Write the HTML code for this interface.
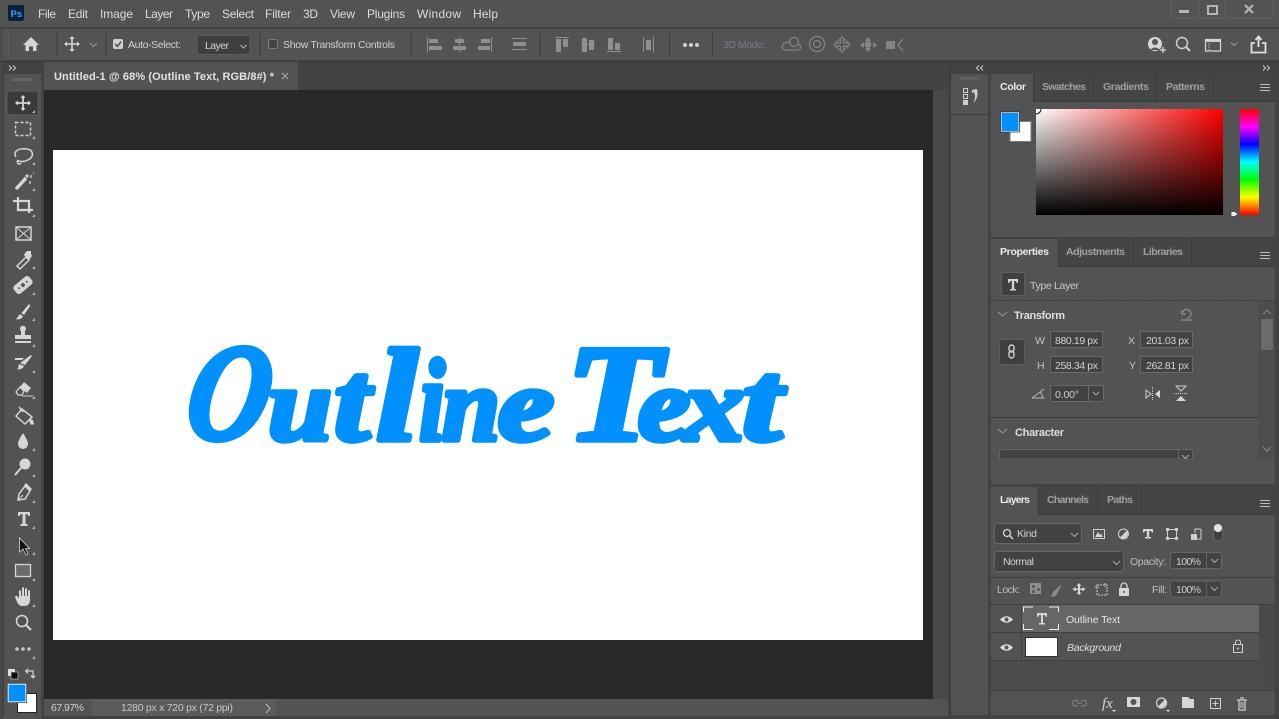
<!DOCTYPE html>
<html><head><meta charset="utf-8"><title>Photoshop</title>
<style>
html,body{margin:0;padding:0;background:#535353;overflow:hidden}
svg{display:block;position:absolute;left:0;top:0}
text{font-family:"Liberation Sans",sans-serif;font-size:11px;fill:#d4d4d4}
.m{font-size:12px;fill:#dcdcdc}
.b{font-weight:bold}
.tab{font-size:10.5px;font-weight:bold;fill:#a0a0a0}
.on{fill:#eaeaea}
.s{font-size:10.5px;fill:#d0d0d0}
.i{fill:#d6d6d6}
.l{fill:none;stroke:#d6d6d6;stroke-width:1.5}
.g{fill:none;stroke:#8a8a8a;stroke-width:1.2}
.box{fill:#424242;stroke:#6a6a6a;stroke-width:1}
.logo{font-family:"Liberation Serif",serif;font-weight:bold;font-style:italic;fill:#0091ff;stroke:#0091ff;stroke-width:5.5;stroke-linejoin:round}
</style></head><body>
<svg width="1279" height="719" viewBox="0 0 1279 719" xmlns="http://www.w3.org/2000/svg">
<defs>
<linearGradient id="wr" x1="0" x2="1" y1="0" y2="0"><stop offset="0" stop-color="#fff"/><stop offset="1" stop-color="#f00"/></linearGradient>
<linearGradient id="bk" x1="0" x2="0" y1="0" y2="1"><stop offset="0" stop-color="#000" stop-opacity="0"/><stop offset="1" stop-color="#000"/></linearGradient>
<linearGradient id="hue" x1="0" x2="0" y1="0" y2="1"><stop offset="0" stop-color="#f00"/><stop offset=".167" stop-color="#f0f"/><stop offset=".333" stop-color="#00f"/><stop offset=".5" stop-color="#0ff"/><stop offset=".667" stop-color="#0f0"/><stop offset=".833" stop-color="#ff0"/><stop offset="1" stop-color="#f00"/></linearGradient>
<path id="c" d="M0 3L3 0V3Z" fill="#b5b5b5"/>
</defs>

<!-- base -->
<rect width="1279" height="719" fill="#535353"/>

<!-- menu bar -->
<rect x="0" y="27" width="1279" height="1.5" fill="#3c3c3c"/>
<rect x="8" y="5" width="16" height="16" rx="2" fill="#04223f"/>
<text x="10.500" y="17" style="font-size:9.500px;font-weight:bold;fill:#3ca6f5">Ps</text>
<text class="m" x="38" y="18" textLength="18">File</text>
<text class="m" x="68" y="18" textLength="20">Edit</text>
<text class="m" x="100" y="18" textLength="33">Image</text>
<text class="m" x="145" y="18" textLength="28">Layer</text>
<text class="m" x="185" y="18" textLength="25">Type</text>
<text class="m" x="222" y="18" textLength="32">Select</text>
<text class="m" x="265" y="18" textLength="26">Filter</text>
<text class="m" x="303" y="18" textLength="15">3D</text>
<text class="m" x="330" y="18" textLength="25">View</text>
<text class="m" x="367" y="18" textLength="38">Plugins</text>
<text class="m" x="417" y="18" textLength="44">Window</text>
<text class="m" x="473" y="18" textLength="25">Help</text>

<!-- window controls -->
<path d="M1171 0V15q0 3 3 3H1270q3 0 3-3V0M1198.500 0V18M1225.500 0V18" fill="none" stroke="#626262" stroke-width="1"/>
<rect x="1179" y="10" width="10" height="3" fill="#b5b5b5"/>
<rect x="1208" y="6" width="9" height="8" fill="none" stroke="#b5b5b5" stroke-width="2"/>
<path d="M1245 5L1253 13M1253 5L1245 13" stroke="#b5b5b5" stroke-width="2.200"/>

<!-- options bar -->
<rect x="0" y="60.500" width="1279" height="1.500" fill="#3a3a3a"/>
<rect x="0" y="28" width="3" height="33" fill="#4a4a4a"/>
<path d="M8.500 33V56" stroke="#6b6b6b" stroke-dasharray="1 1"/>
<path d="M57 33V56M106 33V56M260 33V56M411 33V56M540 33V56M669.500 33V56M712.500 33V56" stroke="#3d3d3d" stroke-width="1"/>
<path class="i" d="M31 37L39 45H36.500V51H33V46.500H29V51H25.500V45H23Z"/>
<g transform="translate(72 44)"><path class="i" d="M0-8L2.500-5H.8V-.8H5V-2.500L8 0L5 2.500V.8H.8V5H2.500L0 8L-2.500 5H-.8V.8H-5V2.500L-8 0L-5-2.500V-.8H-.8V-5H-2.500Z"/></g>
<path d="M90 43L93.500 46.500L97 43" fill="none" stroke="#999" stroke-width="1"/>
<rect x="113" y="39" width="10" height="10" rx="2" fill="#d0d0d0"/>
<path d="M115 44L117.500 46.500L121 41.500" fill="none" stroke="#444" stroke-width="1.500"/>
<text class="s" x="128" y="48" textLength="53">Auto-Select:</text>
<rect class="box" x="197" y="35.500" width="53" height="19" rx="2" style="fill:#3f3f3f;stroke:#5e5e5e"/>
<text class="s" x="205" y="49" textLength="24">Layer</text>
<path d="M240.500 45L243.500 48L246.500 45" fill="none" stroke="#bbb"/>
<rect x="268.500" y="39.500" width="9" height="9" rx="2" fill="#444" stroke="#7a7a7a"/>
<text class="s" x="283" y="48" textLength="112">Show Transform Controls</text>

<!-- align icons -->
<g fill="#8f8f8f">
<rect x="427" y="37" width="1" height="15"/><rect x="429" y="39" width="9" height="4"/><rect x="429" y="46" width="13" height="4"/>
<rect x="459" y="37" width="1" height="15"/><rect x="455" y="39" width="9" height="4"/><rect x="453" y="46" width="13" height="4"/>
<rect x="491" y="37" width="1" height="15"/><rect x="481" y="39" width="9" height="4"/><rect x="478" y="46" width="12" height="4"/>
<rect x="512" y="38" width="15" height="1"/><rect x="513" y="42" width="13" height="4"/><rect x="512" y="49" width="15" height="1"/>
<rect x="555" y="37" width="14" height="1"/><rect x="556" y="39" width="5" height="13"/><rect x="563" y="39" width="5" height="8"/>
<rect x="581" y="44" width="14" height="1"/><rect x="582" y="38" width="5" height="14"/><rect x="589" y="40" width="5" height="10"/>
<rect x="607" y="51" width="14" height="1"/><rect x="608" y="38" width="5" height="12"/><rect x="615" y="43" width="5" height="7"/>
<rect x="643" y="37" width="1" height="15"/><rect x="646" y="40" width="5" height="10"/><rect x="653" y="37" width="1" height="15"/>
</g>
<circle cx="685" cy="45" r="2" fill="#d0d0d0"/><circle cx="691" cy="45" r="2" fill="#d0d0d0"/><circle cx="697" cy="45" r="2" fill="#d0d0d0"/>
<text x="723" y="48" style="font-size:10.500px;fill:#77778a" textLength="42">3D Mode:</text>
<g fill="none" stroke="#858585" stroke-width="1.200">
<circle cx="794" cy="42" r="4.500"/><path d="M789 42C780 43 781 50 786 50H797C802 50 801 45 798 44"/>
<circle cx="817" cy="44" r="7.500"/><circle cx="817" cy="44" r="3.500"/>
<path d="M842 37L845 40H843.500V43H847V41.500L850 44.500L847 47.500V46H843.500V49H845L842 52L839 49H840.500V46H837V47.500L834 44.500L837 41.500V43H840.500V40H839Z"/>
</g>
<g fill="#858585">
<path d="M868 37L871 41H865ZM868 52L871 48H865ZM860 45L864 42V48ZM877 45L873 42V48Z"/><circle cx="868" cy="44.500" r="3.500"/>
<rect x="886" y="41" width="9" height="8"/>
</g>
<path d="M903 39L898 45L903 51" fill="none" stroke="#858585" stroke-width="1.200"/>

<!-- right option icons -->
<circle cx="1155" cy="44" r="7" fill="#d6d6d6"/><circle cx="1155" cy="42" r="3" fill="#535353"/><path d="M1150 50Q1155 45 1160 50" fill="#535353"/>
<path d="M1160 50H1166M1160.500 50M1163 47V53" stroke="#e0e0e0" stroke-width="1.200"/>
<circle cx="1182" cy="43" r="5.500" fill="none" stroke="#d0d0d0" stroke-width="1.500"/><path d="M1186 47L1190 51" stroke="#d0d0d0" stroke-width="2"/>
<rect x="1205.500" y="39.500" width="15" height="11.500" fill="none" stroke="#d0d0d0" stroke-width="1.300"/><rect x="1206" y="40" width="14" height="2" fill="#d0d0d0"/><path d="M1209 43V50" stroke="#d0d0d0" stroke-dasharray="1 1"/>
<path d="M1231 42.500L1234 45.500L1237 42.500" fill="none" stroke="#9a9a9a"/>
<path d="M1255 43H1251.500V52.500H1265.500V43H1262" fill="none" stroke="#e0e0e0" stroke-width="1.800"/>
<path d="M1258.500 47V37M1255.500 40L1258.500 36.500L1261.500 40" fill="none" stroke="#e0e0e0" stroke-width="1.800"/>

<!-- left toolbar -->
<rect x="0" y="62" width="3" height="657" fill="#484848"/>
<rect x="3" y="62" width="39" height="12" fill="#424242"/>
<rect x="3" y="74" width="39" height="645" fill="#535353"/>
<rect x="3" y="74" width="1" height="642" fill="#3f3f3f"/>
<rect x="41" y="62" width="3" height="657" fill="#424242"/>
<path d="M9 65.500L11.500 68L9 70.500M13 65.500L15.500 68L13 70.500" fill="none" stroke="#cfcfcf"/>
<path d="M13 78V81M15 78V81M17 78V81M19 78V81M21 78V81M23 78V81M25 78V81M27 78V81M29 78V81M31 78V81" stroke="#777" stroke-width="1"/>
<rect x="7" y="91" width="31" height="24" rx="2" fill="#3a3a3a" stroke="#5e5e5e" stroke-width="1"/>

<g transform="translate(23 103)"><path class="i" d="M0-8L2.500-5H.9V-.9H5V-2.500L8 0L5 2.500V.9H.9V5H2.500L0 8L-2.500 5H-.9V.9H-5V2.500L-8 0L-5-2.500V-.9H-.9V-5H-2.500Z"/></g>
<rect x="15.500" y="122.500" width="15" height="13" fill="none" stroke="#d6d6d6" stroke-width="1.500" stroke-dasharray="3 2"/>
<path class="l" d="M16 157C12 150 21 148 27 149C34 150 34 157 28 160C24 162 19 162 18 160M18 160C16 162 19 166 21 163" />
<path d="M16 189L26 178" stroke="#d6d6d6" stroke-width="3.500"/><path d="M27 174V178M25 176H29M31 175V178M30 181V184M33 173H34" stroke="#d6d6d6" stroke-width="1.300"/>
<path d="M13 201H29V213M18 197V210H33" fill="none" stroke="#d6d6d6" stroke-width="2.200"/>
<rect x="16" y="227" width="15" height="13" fill="none" stroke="#d6d6d6" stroke-width="1.500"/><path d="M16 227L31 240M31 227L16 240" stroke="#d6d6d6" stroke-width="1"/>
<path class="l" d="M17 266L26 257L29 260L20 269Z"/><path d="M25 253L27 251L31 251L31 254L32 256L29 260L24 255Z" fill="#d6d6d6"/>
<g transform="translate(23 285) rotate(-40)"><rect x="-10" y="-5" width="20" height="10" rx="3" fill="#d6d6d6"/><circle r="2" fill="#555"/><circle cx="-5" r="1" fill="#555"/><circle cx="5" r="1" fill="#555"/></g>
<path class="i" d="M29 304L30.500 305.500L24 315L21.500 313ZM20 314L23 316.500C22 319 18 320 15.500 319C18 318 18 316 20 314Z"/>
<path class="i" d="M21 331A3 3 0 1 1 25 331V335H31V339H15V335H21ZM15 341H31V343H15Z"/>
<path class="i" d="M31 355L32 356L25 365L20 363ZM19 364L24 366C23 369 19 370 17 369C19 368 18 366 19 364ZM15 358H24L22 360H15Z"/>
<path class="i" d="M24 382L31 388L27 393L20 387Z"/><path d="M20 387L24 391L22 395H18L16 392Z" fill="none" stroke="#d6d6d6" stroke-width="1.300"/><path d="M22 396H33" stroke="#d6d6d6" stroke-width="1"/>
<path class="l" d="M22 409L32 417L25 424L16 416Z"/><path d="M19 407L23 412" stroke="#d6d6d6" stroke-width="1.500"/><path class="i" d="M29 419L33 420L34 424Q31 426 30 423Z"/>
<path class="i" d="M23 433C26 438 28 441 28 444A5 5 0 0 1 18 444C18 441 20 438 23 433Z"/>
<circle cx="25" cy="464" r="5.500" fill="#d6d6d6"/><path d="M21 468L15 475" stroke="#d6d6d6" stroke-width="2"/>
<path class="l" d="M25 486L30 491L25 499L18 500L19 494Z"/><path d="M24 485L26 483L32 489L30 491" fill="#d6d6d6"/><path d="M18 500L23 495" stroke="#d6d6d6"/>
<path class="i" d="M18 512H30V516H28.500Q28 514 26 514H25.500V524H27.500V526H20.500V524H22.500V514H22Q20 514 19.500 516H18Z"/>
<path d="M19.500 538V552L23 549L26 555L28 554L25.500 548.500H29.500Z" fill="#111" stroke="#d6d6d6" stroke-width=".8"/>
<rect x="15.500" y="564.500" width="15" height="12" fill="#6b6b6b" stroke="#d6d6d6" stroke-width="1.300"/>
<path class="i" d="M17 596L19 598V591Q20 589 21 591V596H22V588Q23 586 24 588V596H25V589Q26 587 27 589V596H28V591Q29 589 30 591V600Q30 606 24 606H22Q19 606 17 602L15 597Q16 595 17 596Z"/>
<circle cx="22" cy="621" r="5.500" fill="none" stroke="#d6d6d6" stroke-width="1.600"/><path d="M26 625L31 630" stroke="#d6d6d6" stroke-width="2"/>
<circle cx="17" cy="649" r="1.800" fill="#c8c8c8"/><circle cx="23" cy="649" r="1.800" fill="#c8c8c8"/><circle cx="29" cy="649" r="1.800" fill="#c8c8c8"/>
<use href="#c" x="32" y="110"/><use href="#c" x="32" y="136"/><use href="#c" x="32" y="162"/><use href="#c" x="32" y="188"/><use href="#c" x="32" y="214"/><use href="#c" x="32" y="266"/><use href="#c" x="32" y="292"/><use href="#c" x="32" y="318"/><use href="#c" x="32" y="344"/><use href="#c" x="32" y="370"/><use href="#c" x="32" y="396"/><use href="#c" x="32" y="448"/><use href="#c" x="32" y="474"/><use href="#c" x="32" y="500"/><use href="#c" x="32" y="526"/><use href="#c" x="32" y="552"/><use href="#c" x="32" y="578"/><use href="#c" x="32" y="604"/><use href="#c" x="32" y="656"/>
<rect x="8" y="669" width="7" height="7" fill="#ddd"/><rect x="11" y="672" width="7" height="7" fill="#111" stroke="#ddd" stroke-width=".6"/>
<path d="M26 671H33V677M25.500 671L28 669M25.500 671L28 673.500M33 678L31 675.500M33 678L35 675.500" fill="none" stroke="#d6d6d6" stroke-width="1.200"/>
<rect x="17.500" y="693.500" width="19" height="19" fill="#fff" stroke="#222"/>
<rect x="8" y="684" width="18" height="18" fill="#0091ff" stroke="#fff" stroke-width="1.200"/>
<rect x="7.300" y="683.300" width="19.400" height="19.400" fill="none" stroke="#222" stroke-width=".6"/>

<!-- document area -->
<rect x="44" y="62" width="906" height="29" fill="#424242"/>
<rect x="44" y="62" width="254" height="28" fill="#535353"/>
<text x="54" y="80" style="font-size:11px;font-weight:bold;fill:#e2e2e2" textLength="220">Untitled-1 @ 68% (Outline Text, RGB/8#) *</text>
<path d="M282 73L288 79M288 73L282 79" stroke="#aaa" stroke-width="1"/>
<rect x="44" y="90" width="889" height="609" fill="#282828"/>
<rect x="933" y="90" width="15" height="609" fill="#484848"/>
<rect x="53" y="150" width="870" height="490" fill="#fff"/>

<!-- canvas text -->
<g>
<text class="logo" transform="translate(182 439) skewX(-9)" style="font-size:138px" textLength="82" lengthAdjust="spacingAndGlyphs">O</text>
<text class="logo" x="268" y="440" style="font-size:104px" textLength="64" lengthAdjust="spacingAndGlyphs">u</text>
<text class="logo" x="334" y="440" style="font-size:114px" textLength="36" lengthAdjust="spacingAndGlyphs">t</text>
<text class="logo" x="376" y="440" style="font-size:132px" textLength="42" lengthAdjust="spacingAndGlyphs">l</text>
<text class="logo" x="419" y="440" style="font-size:118px" textLength="26" lengthAdjust="spacingAndGlyphs">i</text>
<text class="logo" x="442" y="440" style="font-size:104px" textLength="58" lengthAdjust="spacingAndGlyphs">n</text>
<text class="logo" x="498" y="440" style="font-size:104px" textLength="56" lengthAdjust="spacingAndGlyphs">e</text>
<text class="logo" x="566" y="440" style="font-size:138px" textLength="96" lengthAdjust="spacingAndGlyphs">T</text>
<text class="logo" x="638" y="440" style="font-size:104px" textLength="52" lengthAdjust="spacingAndGlyphs">e</text>
<text class="logo" x="684" y="440" style="font-size:104px" textLength="60" lengthAdjust="spacingAndGlyphs">x</text>
<text class="logo" x="742" y="440" style="font-size:114px" textLength="40" lengthAdjust="spacingAndGlyphs">t</text>
</g>

<!-- status bar -->
<rect x="44" y="699" width="906" height="17" fill="#535353"/>
<rect x="92" y="699" width="184" height="17" fill="#5b5b5b"/>
<text x="51" y="711" class="s" textLength="33">67.97%</text>
<text x="121" y="711" class="s" style="fill:#c6c6c6" textLength="112">1280 px x 720 px (72 ppi)</text>
<path d="M266 704L270 708.500L266 713" fill="none" stroke="#bdbdbd" stroke-width="1"/>

<!-- right dock -->
<rect x="948" y="62" width="331" height="657" fill="#424242"/>
<rect x="950" y="62" width="1" height="657" fill="#3a3a3a"/>
<rect x="951" y="74" width="37" height="645" fill="#535353"/>
<rect x="951" y="114" width="37" height="1" fill="#3c3c3c"/>
<path d="M983 65.500L980.500 68L983 70.500M979 65.500L976.500 68L979 70.500" fill="none" stroke="#cfcfcf" transform="translate(0 0)"/>
<path d="M1263 65.500L1265.500 68L1263 70.500M1267 65.500L1269.500 68L1267 70.500" fill="none" stroke="#cfcfcf"/>
<path d="M960 77V80M962 77V80M964 77V80M966 77V80M968 77V80M970 77V80M972 77V80M974 77V80M976 77V80M978 77V80" stroke="#6f6f6f"/>
<rect x="963.500" y="88.500" width="4" height="4" fill="none" stroke="#ccc"/><rect x="963.500" y="94.500" width="4" height="4" fill="none" stroke="#ccc"/><rect x="963" y="100" width="5" height="5" fill="#ccc"/>
<path d="M972 90L977 89C978 94 978 99 973 103C976 98 975 95 974 92L972 93Z" fill="#d0d0d0"/>

<!-- color panel -->
<rect x="991" y="74" width="284" height="163" fill="#535353"/>
<rect x="991" y="74" width="284" height="27" fill="#454545"/>
<rect x="991" y="74" width="42" height="28" fill="#535353"/>
<path d="M1033.500 74V101M1093.500 74V101M1156.500 74V101M1213.500 74V101" stroke="#3a3a3a"/>
<path d="M1033 101.500H1275" stroke="#3a3a3a"/>
<text class="tab on" x="1000" y="90" textLength="26">Color</text>
<text class="tab" x="1042" y="90" textLength="44">Swatches</text>
<text class="tab" x="1103" y="90" textLength="46">Gradients</text>
<text class="tab" x="1166" y="90" textLength="39">Patterns</text>
<path d="M1260 84.500H1270M1260 87.500H1270M1260 90.500H1270" stroke="#bbb" stroke-width="1"/>
<rect x="1010" y="121.500" width="21" height="20" fill="#fff" stroke="#7c7c7c" stroke-width="1"/>
<rect x="1001" y="112.500" width="18" height="19" fill="#0091ff" stroke="#fff" stroke-width="1"/>
<rect x="1000.500" y="112" width="19" height="20" fill="none" stroke="#222" stroke-width=".7"/>
<rect x="1036" y="109" width="187" height="106" fill="url(#wr)"/>
<rect x="1036" y="109" width="187" height="106" fill="url(#bk)"/>
<path d="M1036 114A5 5 0 0 0 1041 109" fill="none" stroke="#111" stroke-width="1"/>
<rect x="1240" y="109" width="19" height="106" fill="url(#hue)"/>
<path d="M1231 211.500H1235L1238 214L1235 216.500H1231Z" fill="#eee" stroke="#333" stroke-width=".7"/>

<!-- properties panel -->
<rect x="991" y="239" width="284" height="245" fill="#535353"/>
<rect x="991" y="239" width="284" height="27" fill="#454545"/>
<rect x="991" y="239" width="67" height="28" fill="#535353"/>
<path d="M1058.500 239V266M1133.500 239V266M1191.500 239V266" stroke="#3a3a3a"/>
<path d="M1058 266.500H1275" stroke="#3a3a3a"/>
<text class="tab on" x="1000" y="255" textLength="49">Properties</text>
<text class="tab" x="1066" y="255" textLength="59">Adjustments</text>
<text class="tab" x="1143" y="255" textLength="40">Libraries</text>
<path d="M1260 252.500H1270M1260 255.500H1270M1260 258.500H1270" stroke="#bbb" stroke-width="1"/>
<rect x="1001.500" y="272.500" width="23" height="23" rx="2" fill="#3f3f3f" stroke="#5e5e5e"/>
<path class="i" d="M1008 279H1018V283H1016.800Q1016.500 281 1015 281H1014.200V289H1016V290.500H1010V289H1011.800V281H1011Q1009.500 281 1009.200 283H1008Z"/>
<text class="s" x="1030" y="289" style="fill:#c8c8c8" textLength="49">Type Layer</text>
<path d="M991 300.500H1275" stroke="#3c3c3c" stroke-dasharray="2 1"/>
<rect x="1259" y="301" width="16" height="158" fill="#4d4d4d"/>
<path d="M1263 314L1267 310.500L1271 314" fill="none" stroke="#8a8a8a"/>
<rect x="1261" y="319" width="12" height="31" fill="#6b6b6b"/>
<path d="M1263 447L1267 451L1271 447" fill="none" stroke="#8a8a8a"/>
<path d="M998 312L1002.500 316L1007 312" fill="none" stroke="#9a9a9a"/>
<text x="1014" y="319" class="b" style="font-size:11px;fill:#dedede" textLength="51">Transform</text>
<path d="M1181 320H1192M1182 310V314H1186M1182 314A4.500 4.500 0 1 1 1187 318.500" fill="none" stroke="#8f8f8f" stroke-width="1.200"/>
<rect x="999.500" y="339.500" width="25" height="25" rx="2" fill="#3f3f3f" stroke="#5e5e5e"/>
<rect x="1009" y="345" width="5" height="7" rx="2.500" fill="none" stroke="#d0d0d0" stroke-width="1.400"/><rect x="1009" y="351" width="5" height="7" rx="2.500" fill="none" stroke="#d0d0d0" stroke-width="1.400"/>
<text class="s" x="1035" y="344" style="fill:#b9c4cf">W</text>
<text class="s" x="1037" y="369" style="fill:#b9c4cf">H</text>
<text class="s" x="1128" y="344" style="fill:#b9c4cf">X</text>
<text class="s" x="1129" y="369" style="fill:#b9c4cf">Y</text>
<rect class="box" x="1050.500" y="331.500" width="52" height="16"/><rect class="box" x="1050.500" y="356.500" width="52" height="16"/>
<rect class="box" x="1140.500" y="331.500" width="52" height="16"/><rect class="box" x="1140.500" y="356.500" width="52" height="16"/>
<text class="s" x="1055" y="344" textLength="43">880.19 px</text>
<text class="s" x="1055" y="369" textLength="43">258.34 px</text>
<text class="s" x="1146" y="344" textLength="43">201.03 px</text>
<text class="s" x="1146" y="369" textLength="43">262.81 px</text>
<path d="M1032 398H1045M1032 398L1044 389M1040 392Q1043 395 1042 398" fill="none" stroke="#b5b5b5" stroke-width="1"/>
<rect x="1050.500" y="385.500" width="53" height="16" rx="2" fill="#424242" stroke="#6a6a6a"/>
<path d="M1088.500 385.500V401.500" stroke="#6a6a6a"/>
<text class="s" x="1055" y="398" textLength="24">0.00°</text>
<path d="M1093 392L1096 395L1099 392" fill="none" stroke="#aaa"/>
<path d="M1146 390V398L1151 394Z" fill="none" stroke="#cfcfcf"/><path d="M1152.500 387V401" stroke="#cfcfcf" stroke-dasharray="1 1"/><path class="i" d="M1160 390V398L1155 394Z"/>
<path d="M1176 386H1186L1181 391Z" fill="none" stroke="#cfcfcf"/><path d="M1174 393.500H1188" stroke="#cfcfcf" stroke-dasharray="1 1"/><path class="i" d="M1176 401H1186L1181 396Z"/>
<path d="M991 417.500H1259" stroke="#3c3c3c"/>
<path d="M998 429L1002.500 433L1007 429" fill="none" stroke="#9a9a9a"/>
<text x="1015" y="436" class="b" style="font-size:11px;fill:#dedede" textLength="49">Character</text>
<path d="M999.500 459V452Q999.500 449.500 1002 449.500H1190Q1192.500 449.500 1192.500 452V459Z" fill="#424242" stroke="#666"/>
<path d="M1178.500 449.500V459" stroke="#666"/>
<path d="M1182 455L1185.500 458.500L1189 455" fill="none" stroke="#aaa"/>
<rect x="991" y="459" width="284" height="25" fill="#535353"/>

<!-- layers panel -->
<rect x="991" y="487" width="284" height="228" fill="#535353"/>
<rect x="991" y="487" width="284" height="27" fill="#454545"/>
<rect x="991" y="487" width="47" height="28" fill="#535353"/>
<path d="M1038.500 487V514M1097.500 487V514M1141.500 487V514" stroke="#3a3a3a"/>
<path d="M1038 514.500H1275" stroke="#3a3a3a"/>
<text class="tab on" x="1000" y="503" textLength="30">Layers</text>
<text class="tab" x="1047" y="503" textLength="42">Channels</text>
<text class="tab" x="1107" y="503" textLength="26">Paths</text>
<path d="M1260 500.500H1270M1260 503.500H1270M1260 506.500H1270" stroke="#bbb" stroke-width="1"/>
<rect x="994.500" y="523.500" width="87" height="20" rx="3" fill="#424242" stroke="#666"/>
<circle cx="1007" cy="533" r="3.500" fill="none" stroke="#d6d6d6" stroke-width="1.300"/><path d="M1009.500 535.500L1013 539" stroke="#d6d6d6" stroke-width="1.500"/>
<text class="s" x="1017" y="537" textLength="20">Kind</text>
<path d="M1071 533L1074.500 536.500L1078 533" fill="none" stroke="#aaa"/>
<rect x="1093.500" y="529.500" width="11" height="9" fill="none" stroke="#cfcfcf"/><path class="i" d="M1095 537L1098 532L1100 535L1101 533.500L1103 537Z"/>
<circle cx="1123.500" cy="534" r="5" fill="none" stroke="#cfcfcf"/><path class="i" d="M1127 530.500A5 5 0 0 1 1120 537.500Z"/>
<path class="i" d="M1143 529H1153V532.500H1152Q1151.500 531 1150 531H1149.200V537H1151V538.500H1145V537H1146.800V531H1146Q1144.500 531 1144 532.500H1143Z"/>
<rect x="1167.500" y="529.500" width="9" height="9" fill="none" stroke="#cfcfcf"/><rect x="1166" y="528" width="3" height="3" fill="#cfcfcf"/><rect x="1175" y="528" width="3" height="3" fill="#cfcfcf"/><rect x="1166" y="537" width="3" height="3" fill="#cfcfcf"/><rect x="1175" y="537" width="3" height="3" fill="#cfcfcf"/>
<path d="M1195 533V529H1200L1201 530V539H1195" fill="none" stroke="#cfcfcf"/><rect x="1191" y="534" width="6" height="6" fill="#cfcfcf"/>
<rect x="1213.500" y="525" width="9" height="16" rx="4.500" fill="#3f3f3f" stroke="#666"/><circle cx="1218" cy="528" r="4" fill="#e6e6e6"/>
<rect x="994.500" y="551.500" width="129" height="20" rx="3" fill="#424242" stroke="#666"/>
<text class="s" x="1003" y="565" textLength="31">Normal</text>
<path d="M1113 561L1116.500 564.500L1120 561" fill="none" stroke="#aaa"/>
<text class="s" x="1130" y="565" style="fill:#bdbdbd" textLength="36">Opacity:</text>
<rect x="1170.500" y="552.500" width="51" height="16" rx="2" fill="#424242" stroke="#666"/><path d="M1206.500 552.500V568.500" stroke="#666"/>
<text class="s" x="1176" y="565" textLength="25">100%</text>
<path d="M1211 559L1214.500 562.500L1218 559" fill="none" stroke="#aaa"/>
<path d="M991 577.500H1275" stroke="#3f3f3f"/>
<text class="s" x="997" y="593" style="fill:#bdbdbd" textLength="23">Lock:</text>
<rect x="1030" y="583" width="11" height="11" fill="#8f8f8f"/><path d="M1032 585h3v3h-3zM1037 588h3v3h-3zM1032 590h3v3h-3z" fill="#5f5f5f"/>
<path d="M1062 584L1053 592L1051 597L1056 596Z" fill="#8a8a8a"/>
<path class="i" d="M1079 583L1081.500 586H1080V588.500H1082.500V587L1085.500 589L1082.500 591.500V590H1080V592.500H1081.500L1079 595L1076.500 592.500H1078V590H1075.500V591.500L1072.500 589L1075.500 587V588.500H1078V586H1076.500Z"/>
<path d="M1097 585H1107V595H1097ZM1105 583V587M1095 587H1099" fill="none" stroke="#cfcfcf" stroke-width="1" stroke-dasharray="2 1"/>
<rect x="1119" y="588" width="10" height="8" fill="#d6d6d6"/><path d="M1121 588V586A3 3 0 0 1 1127 586V588" fill="none" stroke="#d6d6d6" stroke-width="1.300"/><circle cx="1124" cy="592" r="1" fill="#555"/>
<text class="s" x="1152" y="593" style="fill:#bdbdbd" textLength="15">Fill:</text>
<rect x="1170.500" y="581" width="51" height="16" rx="2" fill="#424242" stroke="#666"/><path d="M1206.500 581V597" stroke="#666"/>
<text class="s" x="1176" y="593" textLength="25">100%</text>
<path d="M1211 587L1214.500 590.500L1218 587" fill="none" stroke="#aaa"/>
<path d="M991 604.500H1275" stroke="#3f3f3f"/>
<rect x="991" y="605" width="268" height="85" fill="#4c4c4c"/>
<rect x="1259" y="605" width="16" height="85" fill="#4a4a4a"/>
<rect x="991" y="605" width="30" height="27" fill="#535353"/>
<rect x="991" y="633" width="30" height="27" fill="#535353"/>
<rect x="1021" y="605" width="238" height="27" fill="#666"/>
<rect x="1021" y="633" width="238" height="27" fill="#535353"/>
<path d="M991 632.500H1259M991 660.500H1259" stroke="#3f3f3f"/>
<path d="M1021.500 605V660" stroke="#3f3f3f"/>
<path d="M1000 619.500Q1006.500 613 1013 619.500Q1006.500 626 1000 619.500Z" fill="#e0e0e0"/><circle cx="1006.500" cy="619.500" r="2" fill="#555"/>
<path d="M1000 647.500Q1006.500 641 1013 647.500Q1006.500 654 1000 647.500Z" fill="#e0e0e0"/><circle cx="1006.500" cy="647.500" r="2" fill="#555"/>
<path d="M1023.500 612V607H1033M1049 607H1058.500V612M1023.500 624V629.500H1033M1049 629.500H1058.500V624" fill="none" stroke="#eee" stroke-width="1"/>
<path class="i" d="M1037 613H1047V617H1046Q1045.500 615 1044 615H1043V623H1045V624.500H1039V623H1041V615H1040Q1038.500 615 1038 617H1037Z"/>
<text class="s" x="1066" y="623" style="fill:#e4e4e4" textLength="54">Outline Text</text>
<rect x="1025.500" y="637.500" width="32" height="19" fill="#fff" stroke="#333"/>
<text class="s" x="1067" y="651" style="font-style:italic;fill:#dedede" textLength="54">Background</text>
<rect x="1233.500" y="644.500" width="9" height="8" fill="none" stroke="#d0d0d0"/><path d="M1235.500 644.500V642.500A2.500 2.500 0 0 1 1240.500 642.500V644.500" fill="none" stroke="#d0d0d0"/><circle cx="1238" cy="648.500" r="1" fill="#d0d0d0"/>
<path d="M991 690.500H1275" stroke="#3c3c3c" stroke-dasharray="2 1"/>
<rect x="991" y="691" width="284" height="24" fill="#535353"/>
<path d="M1078 700.500H1075A2.800 2.800 0 0 0 1075 706H1078M1081 700.500H1084A2.800 2.800 0 0 1 1084 706H1081M1077 703H1082" fill="none" stroke="#7f7f7f" stroke-width="1.200"/>
<text x="1102" y="708" style="font-family:'Liberation Serif',serif;font-style:italic;font-size:15px;fill:#d6d6d6">fx</text>
<path d="M1112 710H1116L1114 712Z" fill="#ddd"/>
<rect x="1127" y="697" width="13" height="10" fill="#d6d6d6"/><circle cx="1133.500" cy="702" r="3" fill="#555"/>
<circle cx="1161.500" cy="703" r="5" fill="none" stroke="#d6d6d6" stroke-width="1.200"/><path class="i" d="M1165 699.500A5 5 0 0 1 1158 706.500Z"/>
<path d="M1166 710H1170L1168 712Z" fill="#ddd"/>
<path class="i" d="M1182 697H1188L1190 699H1194V708H1182Z"/>
<rect x="1210.500" y="698.500" width="10" height="10" fill="none" stroke="#d0d0d0"/><path d="M1215.500 700.500V706.500M1212.500 703.500H1218.500" stroke="#d0d0d0"/>
<path d="M1237 700H1247M1239 700V710H1245V700M1240 698H1244" fill="none" stroke="#d0d0d0" stroke-width="1.200"/><path d="M1241 702V708M1243 702V708" stroke="#d0d0d0"/>
<rect x="948" y="715" width="331" height="4" fill="#424242"/>
<rect x="44" y="716" width="904" height="3" fill="#424242"/>
<rect x="1275" y="62" width="4" height="657" fill="#424242"/>
</svg>
</body></html>
